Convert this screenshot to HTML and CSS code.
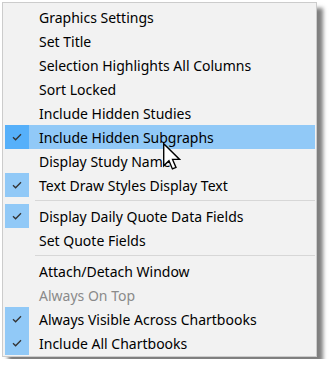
FILE: index.html
```html
<!DOCTYPE html>
<html lang="en">
<head>
  <meta charset="UTF-8" />
  <title>Chart Menu</title>
  <link rel="stylesheet" href="styles.css">
</head>
<body>
  <div class="menu">
    <div class="item"><span class="check"></span><span class="label">Graphics Settings</span></div>
    <div class="item"><span class="check"></span><span class="label">Set Title</span></div>
    <div class="item"><span class="check"></span><span class="label">Selection Highlights All Columns</span></div>
    <div class="item"><span class="check"></span><span class="label">Sort Locked</span></div>
    <div class="item"><span class="check"></span><span class="label">Include Hidden Studies</span></div>
    <div class="item hover checked"><span class="check"><svg viewBox="0 0 10 8"><path d="M1 4.2 L3.6 6.8 L9 1.2" /></svg></span><span class="label">Include Hidden Subgraphs</span></div>
    <div class="item"><span class="check"></span><span class="label">Display Study Name</span></div>
    <div class="item checked"><span class="check"><svg viewBox="0 0 10 8"><path d="M1 4.2 L3.6 6.8 L9 1.2" /></svg></span><span class="label">Text Draw Styles Display Text</span></div>
    <div class="sep"></div>
    <div class="item checked"><span class="check"><svg viewBox="0 0 10 8"><path d="M1 4.2 L3.6 6.8 L9 1.2" /></svg></span><span class="label">Display Daily Quote Data Fields</span></div>
    <div class="item"><span class="check"></span><span class="label">Set Quote Fields</span></div>
    <div class="sep"></div>
    <div class="item"><span class="check"></span><span class="label">Attach/Detach Window</span></div>
    <div class="item disabled"><span class="check"></span><span class="label">Always On Top</span></div>
    <div class="item checked"><span class="check"><svg viewBox="0 0 10 8"><path d="M1 4.2 L3.6 6.8 L9 1.2" /></svg></span><span class="label">Always Visible Across Chartbooks</span></div>
    <div class="item checked"><span class="check"><svg viewBox="0 0 10 8"><path d="M1 4.2 L3.6 6.8 L9 1.2" /></svg></span><span class="label">Include All Chartbooks</span></div>

    <svg class="cursor" viewBox="0 0 13 21" width="18" height="29">
      <path d="M0.5 0.5 L0.5 16.5 L4.3 12.8 L6.8 18.8 L9.4 17.7 L6.9 11.9 L12 11.9 Z" />
    </svg>
  </div>
</body>
</html>
```

FILE: styles.css
```css
body {
  margin: 0;
  background: #fff;
  font-family: 'Noto Sans', 'Segoe UI', sans-serif;
  font-size: 14px;
}

.menu {
  position: relative;
  box-sizing: border-box;
  width: 315px;
  margin: 2px;
  padding: 2px 1px 1px 2px;
  background: #f2f2f2;
  border: 1px solid #cccccc;
  box-shadow: 6px 6px 4px rgba(0, 0, 0, 0.5);
}

.item {
  display: flex;
  align-items: center;
  height: 24px;
  color: #000;
}
.item.hover { background: #91c9f7; }
.item.disabled { color: #8a8a8a; }

.check {
  display: flex;
  align-items: center;
  justify-content: center;
  width: 24px;
  height: 24px;
  flex: none;
}
.item.checked .check { background: #91c9f7; }
.item.hover .check { background: #56b0fa; }
.check svg {
  width: 10px;
  height: 8px;
  fill: none;
  stroke: #333;
  stroke-width: 1.3;
}

.label {
  padding-left: 10px;
  white-space: nowrap;
}

.sep {
  height: 7px;
  margin-left: 30px;
  position: relative;
}
.sep::after {
  content: '';
  display: block;
  position: absolute;
  left: 0;
  right: 0;
  top: 3px;
  border-top: 1px solid #d7d7d7;
}

.cursor {
  position: absolute;
  left: 160px;
  top: 140px;
}
.cursor path {
  fill: #fff;
  stroke: #000;
  stroke-width: 1;
}
```
